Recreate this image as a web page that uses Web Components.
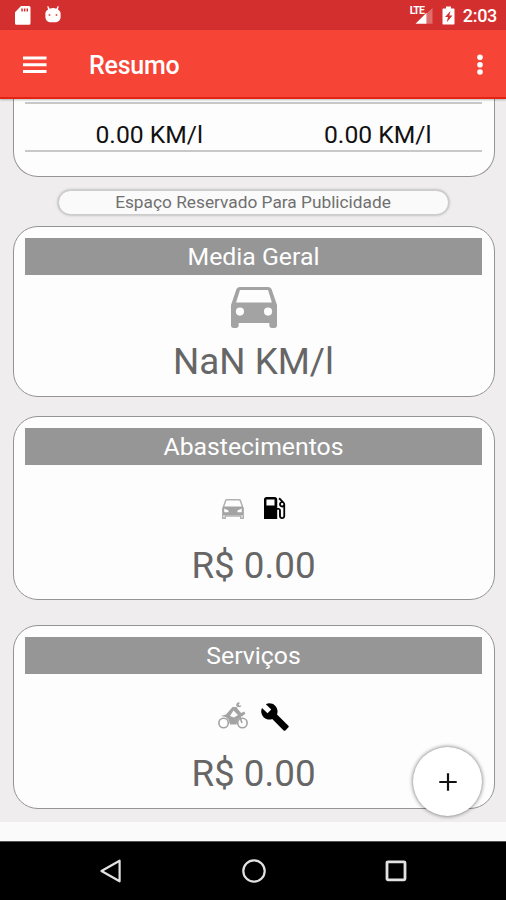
<!DOCTYPE html>
<html lang="pt-BR">
<head>
<meta charset="utf-8">
<title>Resumo</title>
<style>
html,body{margin:0;height:100%}
body{font-family:Roboto,"Liberation Sans",sans-serif;background:#fafafa;overflow:hidden}
</style>
</head>
<body>
<resumo-app></resumo-app>
<script>
const define = (name, html) => {
  const t = document.createElement('template');
  t.innerHTML = html;
  customElements.define(name, class extends HTMLElement {
    constructor() {
      super();
      this.attachShadow({ mode: 'open' }).append(t.content.cloneNode(true));
    }
  });
};

const glyphs = {
  car: ['0 0 18 16', '<path fill-rule="evenodd" d="M15.92 1.01C15.72.42 15.16 0 14.5 0h-11c-.66 0-1.21.42-1.42 1.01L0 7v8c0 .55.45 1 1 1h1c.55 0 1-.45 1-1v-1h12v1c0 .55.45 1 1 1h1c.55 0 1-.45 1-1V7zM3.5 11.2a1.6 1.6 0 1 1 0-3.2 1.6 1.6 0 0 1 0 3.2zm11 0a1.6 1.6 0 1 1 0-3.2 1.6 1.6 0 0 1 0 3.2zM2 6l1.500-4.800h11L16 6z"/>'],
  sedan: ['0 0 22 20', '<path fill="none" stroke="currentColor" stroke-width="1.500" opacity=".85" d="M1.400 8L3.600 1.700c.2-.6.500-.9 1.200-.9h12.400c.7 0 1 .3 1.200.9L20.600 8l.7 1.500v9.700h-2.500v-2.200H3.200v2.200H.7V9.500z"/><path fill-rule="evenodd" d="M1 7.500h20v8.700H1zM2.200 9.500v3.700h4.300v-1.700zm17.600 0v3.700h-4.300v-1.700z"/>'],
  fuel: ['4 3 18 18', '<path fill-rule="evenodd" d="M20.600 7.230l.01-.01-3.720-3.720L15.830 4.560l2.110 2.110c-.94.36-1.610 1.260-1.610 2.330 0 1.380 1.120 2.500 2.500 2.500.36 0 .69-.08 1-.21v7.210c0 .55-.45 1-1 1s-1-.45-1-1V14c0-1.100-.9-2-2-2h-1V5c0-1.100-.9-2-2-2H6c-1.100 0-2 .9-2 2v16h10.800v-7.500h1.500v5c0 1.380 1.120 2.500 2.500 2.500s2.500-1.120 2.500-2.500V9c0-.69-.28-1.320-.73-1.770zM12.600 10H6V5h6.600zm6.230 0c-.55 0-1-.45-1-1s.45-1 1-1 1 .45 1 1-.45 1-1 1z"/>'],
  wrench: ['.8 .8 22.400 22.400', '<path d="M22.700 19l-9.100-9.100c.9-2.300.4-5-1.500-6.900-2-2-5-2.400-7.400-1.300L9 6 6 9 1.600 4.700C.4 7.100.9 10.100 2.900 12.100c1.900 1.900 4.600 2.400 6.900 1.500l9.100 9.100c.4.4 1 .4 1.400 0l2.300-2.300c.5-.4.5-1.100.1-1.400z"/>'],
  moto: ['0 0 30 27', '<g fill="none" stroke="currentColor" stroke-width="1.600"><circle cx="5.600" cy="21" r="4.700"/><circle cx="24.400" cy="21" r="4.700"/><path d="M18 6.500l5 5.500 3.700-1.700M20 13.500h4l3-2.500M21.500 14l2.500 7"/></g><path fill-rule="evenodd" d="M3 14l5-1.500L14.500 5h4l2 3.500 3 4-.5 3-3 2-1.500 5H12l-1.500-5-3-2.500zM15.500 8.500L12 14l4 1.500 4-2.500z"/><path d="M18.200 3.200C18.200 1.400 19.400.2 21 .2l1 .8-1.600 1.500 1.200 1.300 1.700-.5c0 1.200-.8 1.900-2.200 1.900-1.600 0-2.900-.7-2.900-2z"/>'],
  menu: ['0 0 24 18', '<path d="M0 .5h23.500v2.900H0zM0 7.300h23.500v2.900H0zM0 14h23.500v2.900H0z"/>'],
  more: ['0 0 6 22', '<circle cx="3" cy="3.300" r="2.800"/><circle cx="3" cy="10.700" r="2.800"/><circle cx="3" cy="18" r="2.800"/>'],
  sd: ['0 0 16 19', '<path fill-rule="evenodd" d="M6 0h8a1.500 1.500 0 0 1 1.500 1.500v15.700a1.500 1.500 0 0 1-1.500 1.500H1.500A1.500 1.500 0 0 1 0 17.200V6.300zM6.300 2.600v2.800h1.500V2.600zm2.600 0v2.800h1.500V2.600zm2.600 0v2.800H13V2.600z"/>'],
  droid: ['0 0 16 18', '<path fill-rule="evenodd" d="M3.200 0l1.500 2.800a8 8 0 0 1 6.600 0L12.800 0l1 .5-.9 3.300c1.600 1.100 2.700 2.200 2.700 4.200v4c0 3.200-2.800 5.300-5.500 5.300H6C3.200 17.300.4 15.200.4 12V8c0-2 1.100-3.100 2.700-4.200L2.200.5zM3.700 8.700v1.600h1.600V8.700zm7 0v1.600h1.600V8.700z"/>'],
  signal: ['0 0 18 17', '<path opacity=".3" d="M17.500 0v16.700h-6V5.800z"/><path d="M11.500 5v11.700H.5z"/>'],
  battery: ['0 0 13 19', '<path fill-rule="evenodd" d="M4 .5h5v2h2.500c.7 0 1 .4 1 1V17.500c0 .7-.3 1-1 1h-10c-.7 0-1-.3-1-1V3.500c0-.6.3-1 1-1H4zM8.500 5L3 11h3l-1.200 5.300L10.500 9.500H7.300z"/>'],
  back: ['0 0 22 24', '<path d="M19.600 1.700v20.600L1.500 12z" fill="none" stroke="currentColor" stroke-width="2.200" stroke-linejoin="round"/>'],
  home: ['0 0 24 24', '<circle cx="12" cy="12" r="10.700" fill="none" stroke="currentColor" stroke-width="2.200"/>'],
  recent: ['0 0 22 22', '<rect x="2" y="1.800" width="18" height="18" rx="1" fill="none" stroke="currentColor" stroke-width="2.800"/>'],
  plus: ['0 0 18 18', '<path d="M7.900.3h2.200v7.600h7.600v2.200h-7.600v7.600H7.900v-7.600H.3V7.900h7.600z"/>']
};
customElements.define('app-icon', class extends HTMLElement {
  connectedCallback() {
    if (this.shadowRoot) return;
    const [box, body] = glyphs[this.getAttribute('name')];
    const w = this.getAttribute('w'), h = this.getAttribute('h');
    this.attachShadow({ mode: 'open' }).innerHTML =
      `<style>:host{display:block;flex:none;width:${w}px;height:${h}px}svg{display:block;width:100%;height:100%;fill:currentColor}</style>
       <svg viewBox="${box}" preserveAspectRatio="none">${body}</svg>`;
  }
});

define('status-bar', `<style>
:host{display:flex;box-sizing:border-box;height:30px;background:#d32f2f;color:#fff;padding:0 9px 0 15px;align-items:flex-start;flex:none}
.sd{margin:6px 14px 0 0}.droid{margin-top:6px}
.sig{margin-left:auto;position:relative;padding:8px 9px 0 5px}
.lte{position:absolute;left:0;top:5px;font:700 10.500px/11px Roboto,sans-serif;letter-spacing:-.9px}
.bat{margin:6px 8px 0 0}
.time{font-weight:500;font-size:18px;line-height:32px;letter-spacing:-.3px}
</style>
<app-icon class="sd" name="sd" w="16" h="19"></app-icon><app-icon class="droid" name="droid" w="16" h="17"></app-icon>
<div class="sig"><app-icon name="signal" w="18" h="16"></app-icon><span class="lte">LTE</span></div>
<app-icon class="bat" name="battery" w="13" h="19"></app-icon><span class="time">2:03</span>`);

define('app-bar', `<style>
:host{display:flex;box-sizing:border-box;height:69px;background:#f64436;color:#fff;align-items:center;padding:2px 23px 0;flex:none;border-bottom:2px solid #e52313;box-shadow:0 1px 2px #0004;position:relative}
.t{font-weight:500;font-size:25px;line-height:30px;margin:2px auto 0 42px;letter-spacing:-.25px}
</style>
<app-icon name="menu" w="24" h="18"></app-icon><div class="t"><slot></slot></div><app-icon name="more" w="6" h="22"></app-icon>`);

define('summary-card', `<style>
:host{display:flex;flex-direction:column;box-sizing:border-box;align-items:center;border:1px solid #949494;border-radius:25px;background:#fefdfe;padding:11px;flex:none;color:#666}
h2{margin:0;width:457px;height:37px;background:#969696;color:#fff;font-weight:400;font-size:24.800px;line-height:38px;text-align:center}
.icons{display:flex;color:#a3a3a3;align-items:flex-start}
.v{font-size:36.800px;line-height:43px;white-space:nowrap}
</style>
<h2><slot name="title"></slot></h2><div class="icons"><slot name="icons"></slot></div><div class="v"><slot></slot></div>`);

define('average-row', `<style>
:host{display:flex;box-sizing:border-box;width:457px;height:50px;border:solid #c8c8c8;border-width:2px 0;color:#111;font-size:24.700px;line-height:61px}
div{flex:1;text-align:center;padding-left:20px}
</style><div><slot name="a"></slot></div><div><slot name="b"></slot></div>`);

define('ad-slot', `<style>
:host{display:block;box-sizing:border-box;width:391px;height:25px;border:1px solid #ccc;border-radius:13px;background:#fafafa;box-shadow:0 0 3px #0005;font-size:17.300px;line-height:22px;text-align:center;color:#707070;flex:none}
</style><slot></slot>`);

define('add-button', `<style>
:host{display:flex;position:absolute;left:413px;top:747px;width:69px;height:69px;border-radius:50%;background:#fff;box-shadow:0 0 4px #0009;color:#111;align-items:center;justify-content:center}
</style><app-icon name="plus" w="18" h="18"></app-icon>`);

define('nav-bar', `<style>
:host{display:flex;box-sizing:border-box;height:59px;background:#000;color:#e2e2e2;border-top:1px solid #555;justify-content:space-between;align-items:center;padding:0 99px 0 100px;flex:none}
</style><app-icon name="back" w="22" h="24"></app-icon><app-icon name="home" w="24" h="24"></app-icon><app-icon name="recent" w="22" h="22"></app-icon>`);

define('resumo-app', `<style>
:host{display:flex;flex-direction:column;width:506px;height:900px;position:relative;background:#fafafa}
main{display:flex;flex-direction:column;align-items:center;height:723px;background:#efedee;overflow:hidden;flex:none}
.gap{flex:1}
summary-card{width:482px;margin-left:1px}
.first{box-sizing:border-box;width:482px;height:78px;margin-left:1px;border:1px solid #949494;border-top:0;border-radius:0 0 25px 25px;background:#fefdfe;display:flex;flex-direction:column;align-items:center;flex:none}
average-row{margin-top:3px}
ad-slot{margin:13px 0 11px}
.m{height:171px}.a{height:184px;margin-top:19px}.s{height:184px;margin-top:25px}
.dark{color:#000}
</style>
<status-bar></status-bar><app-bar>Resumo</app-bar>
<main>
<div class="first"><average-row><span slot="a">0.00 KM/l</span><span slot="b">0.00 KM/l</span></average-row></div>
<ad-slot>Espaço Reservado Para Publicidade</ad-slot>
<summary-card class="m"><span slot="title">Media Geral</span><app-icon slot="icons" name="car" w="46" h="41" style="margin:12px 0"></app-icon>NaN KM/l</summary-card>
<summary-card class="a"><span slot="title">Abastecimentos</span><app-icon slot="icons" name="sedan" w="22" h="20" style="margin:34px 20px 25px 0"></app-icon><app-icon class="dark" slot="icons" name="fuel" w="22" h="22" style="margin-top:32px"></app-icon>R$ 0.00</summary-card>
<summary-card class="s"><span slot="title">Serviços</span><app-icon slot="icons" name="moto" w="30" h="27" style="margin:28px 13px 23px 0"></app-icon><app-icon class="dark" slot="icons" name="wrench" w="28" h="28" style="margin:29px 1px 0 0"></app-icon>R$ 0.00</summary-card>
</main>
<div class="gap"></div><nav-bar></nav-bar><add-button></add-button>`);
</script>
</body>
</html>
